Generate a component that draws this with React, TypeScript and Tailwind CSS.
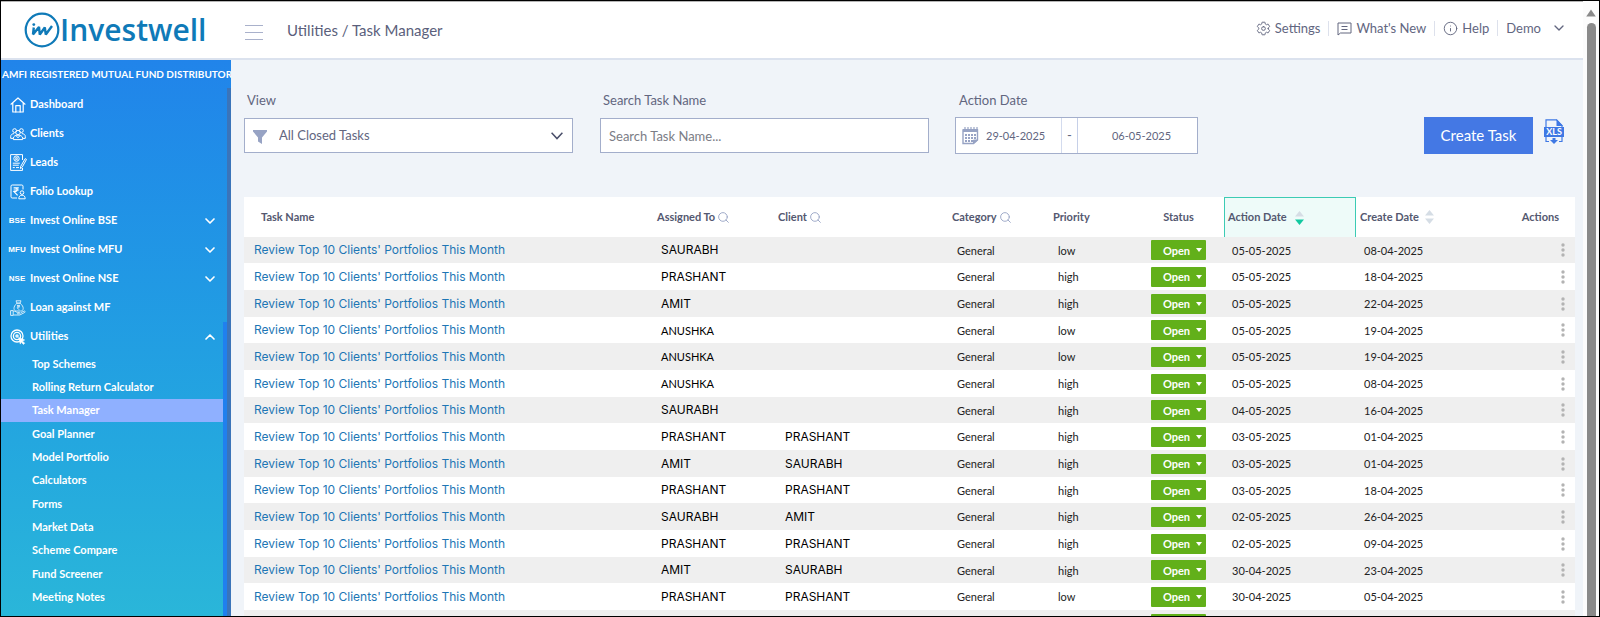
import React, { useState } from 'react';
import { Search, ChevronDown, ChevronUp, Info } from 'lucide-react';
import { IoSettingsOutline } from 'react-icons/io5';

interface Task {
  assignedTo: string;
  client?: string;
  priority: 'low' | 'high';
  actionDate: string;
  createDate: string;
}

const TASK_NAME = "Review Top 10 Clients' Portfolios This Month";

const tasks: Task[] = [
  { assignedTo: 'SAURABH', priority: 'low', actionDate: '05-05-2025', createDate: '08-04-2025' },
  { assignedTo: 'PRASHANT', priority: 'high', actionDate: '05-05-2025', createDate: '18-04-2025' },
  { assignedTo: 'AMIT', priority: 'high', actionDate: '05-05-2025', createDate: '22-04-2025' },
  { assignedTo: 'ANUSHKA', priority: 'low', actionDate: '05-05-2025', createDate: '19-04-2025' },
  { assignedTo: 'ANUSHKA', priority: 'low', actionDate: '05-05-2025', createDate: '19-04-2025' },
  { assignedTo: 'ANUSHKA', priority: 'high', actionDate: '05-05-2025', createDate: '08-04-2025' },
  { assignedTo: 'SAURABH', priority: 'high', actionDate: '04-05-2025', createDate: '16-04-2025' },
  { assignedTo: 'PRASHANT', client: 'PRASHANT', priority: 'high', actionDate: '03-05-2025', createDate: '01-04-2025' },
  { assignedTo: 'AMIT', client: 'SAURABH', priority: 'high', actionDate: '03-05-2025', createDate: '01-04-2025' },
  { assignedTo: 'PRASHANT', client: 'PRASHANT', priority: 'high', actionDate: '03-05-2025', createDate: '18-04-2025' },
  { assignedTo: 'SAURABH', client: 'AMIT', priority: 'high', actionDate: '02-05-2025', createDate: '26-04-2025' },
  { assignedTo: 'PRASHANT', client: 'PRASHANT', priority: 'high', actionDate: '02-05-2025', createDate: '09-04-2025' },
  { assignedTo: 'AMIT', client: 'SAURABH', priority: 'high', actionDate: '30-04-2025', createDate: '23-04-2025' },
  { assignedTo: 'PRASHANT', client: 'PRASHANT', priority: 'low', actionDate: '30-04-2025', createDate: '05-04-2025' },
  { assignedTo: 'AMIT', client: 'SAURABH', priority: 'low', actionDate: '30-04-2025', createDate: '05-04-2025' },
];

const HomeIcon = () => (
  <svg viewBox="0 0 16 16" className="w-4 h-4" fill="none" stroke="currentColor" strokeWidth="1.2" strokeLinejoin="round" strokeLinecap="round">
    <path d="M1 7.2 8 1l7 6.2M2.8 6v9h10.4V6" />
    <path d="M5.8 15V8.6h4.4V15" />
  </svg>
);

const ClientsIcon = () => (
  <svg viewBox="0 0 16 16" className="w-4 h-4" fill="none" stroke="currentColor" strokeWidth="1">
    <circle cx="4.6" cy="4.6" r="1.9" />
    <circle cx="11.4" cy="4.6" r="1.9" />
    <circle cx="8" cy="6.6" r="2.2" />
    <path d="M3.4 13.6v-1.4c0-2 2-3 4.6-3s4.6 1 4.6 3v1.4z" />
    <path d="M3.2 12.4H.7v-2c0-1.6 1.3-2.7 3.5-2.8M12.8 12.4h2.5v-2c0-1.6-1.3-2.7-3.5-2.8M6 9.6l2 2.2 2-2.2" />
  </svg>
);

const LeadsIcon = () => (
  <svg viewBox="0 0 17 17" className="w-[17px] h-[17px]" fill="none" stroke="currentColor" strokeWidth="1">
    <path d="M12.5 6V.6H.6v15.8h11.9V14" />
    <circle cx="6.5" cy="4.6" r="2.7" />
    <circle cx="6.5" cy="4.2" r=".9" />
    <path d="M5 6.4c.6-1 2.4-1 3 0M2.8 9.2h7M2.8 11.2h6M2.8 13.6h2M6 13.6h3" />
    <path d="m15.2 4.6 1.3.8-4.4 8-1.7 1.2.2-2z" />
  </svg>
);

const FolioIcon = () => (
  <svg viewBox="0 0 16 16" className="w-4 h-4" fill="none" stroke="currentColor" strokeWidth="1">
    <path d="M13 5.5V2.2C13 1.4 12.5 1 11.8 1H2.2C1.4 1 1 1.5 1 2.2v10.6c0 .8.5 1.2 1.2 1.2H7" />
    <path d="M3.6 3.8h5.2M3.6 6h5.2M4.6 3.8c3.6 0 3.4 3.8 0 3.8h-.6l3.6 3.8" strokeWidth="1.2" />
    <circle cx="12" cy="8.6" r="1.8" />
    <path d="M8.8 14.8c0-2.4 1.2-3.6 3.2-3.6s3.2 1.2 3.2 3.6z" />
  </svg>
);

const LoanIcon = () => (
  <svg viewBox="0 0 16 16" className="w-4 h-4 opacity-80" fill="none" stroke="currentColor" strokeWidth="1">
    <path d="M7 3.2 6 .8h5l-1 2.4zM7 3.2C4.8 5 4 6.8 4 8.4c0 1.8 1.2 2.6 2.5 2.6h4.2c1.4 0 2.5-.8 2.5-2.6 0-1.6-.9-3.4-3.2-5.2z" />
    <path d="M7 5.4h3M7 6.8h3M7.2 5.4c2.2 0 2 2.4 0 2.4l2 2" />
    <path d="M.6 10.6h2.6v4.8H.6zM3.2 11.2h1.6l2.8 1.4h2c.8 0 .8 1.2 0 1.2H7M3.2 15h6.6l5-2.6c.8-.6.2-1.6-.6-1.3l-3.4 1.5" />
  </svg>
);

const UtilitiesIcon = () => (
  <svg viewBox="0 0 16 16" className="w-4 h-4" fill="none" stroke="currentColor" strokeWidth="1.3">
    <circle cx="7" cy="7" r="6" />
    <circle cx="7" cy="7" r="3.6" />
    <circle cx="7" cy="7" r="1.1" />
    <path d="m8.6 8.6 6 2.4-2.2.9 2.3 2.3-1.2 1.2-2.3-2.3-.9 2z" fill="currentColor" strokeWidth=".6" />
  </svg>
);

const NoteIcon = () => (
  <svg viewBox="0 0 15 15" className="w-[15px] h-[15px]" fill="none" stroke="currentColor" strokeWidth="1">
    <path d="M1 14V2h13v10H3.5z" strokeLinejoin="round" />
    <path d="M4.5 5.5h6M4.5 8.5h6" />
  </svg>
);

const CodeIcon = ({ code }: { code: string }) => (
  <span className="font-['Liberation_Sans',sans-serif] text-[8px] mr-0.5">{code}</span>
);

const menu = [
  { label: 'Dashboard', icon: <HomeIcon /> },
  { label: 'Clients', icon: <ClientsIcon /> },
  { label: 'Leads', icon: <LeadsIcon /> },
  { label: 'Folio Lookup', icon: <FolioIcon /> },
  { label: 'Invest Online BSE', icon: <CodeIcon code="BSE" />, expandable: true },
  { label: 'Invest Online MFU', icon: <CodeIcon code="MFU" />, expandable: true },
  { label: 'Invest Online NSE', icon: <CodeIcon code="NSE" />, expandable: true },
  { label: 'Loan against MF', icon: <LoanIcon /> },
  { label: 'Utilities', icon: <UtilitiesIcon />, expandable: true, open: true },
];

const utilities = [
  'Top Schemes',
  'Rolling Return Calculator',
  'Task Manager',
  'Goal Planner',
  'Model Portfolio',
  'Calculators',
  'Forms',
  'Market Data',
  'Scheme Compare',
  'Fund Screener',
  'Meeting Notes',
];

function Logo() {
  return (
    <a href="#home" aria-label="Investwell" className="flex items-center text-[#0f7ab8]">
      <svg viewBox="0 0 36 36" className="w-9 h-9" fill="none" stroke="currentColor">
        <circle cx="18" cy="18" r="16.3" strokeWidth="2.2" />
        <circle cx="9.8" cy="12.6" r="1.4" fill="currentColor" stroke="none" />
        <path d="M9.8 15.5 9 22.5l6-7.500.8 7.500 5-7 1 7 6.200-8.500" strokeWidth="2.4" strokeLinejoin="bevel" />
      </svg>
      <span className="font-['Open_Sans',sans-serif] text-[30px] leading-9 font-semibold">Investwell</span>
    </a>
  );
}

function Header() {
  return (
    <header className="flex items-center h-[59px] shrink-0 bg-white border-t border-t-[#b5b5b5] border-b-2 border-b-[#dbe2ee]">
      <div className="w-[230px] pl-[23px] shrink-0">
        <Logo />
      </div>
      <button aria-label="Toggle menu" className="ml-3.5 w-[18px] flex flex-col gap-1.5 pt-1">
        <span className="h-px w-full bg-[#a9b1cb]" />
        <span className="h-px w-full bg-[#a9b1cb]" />
        <span className="h-px w-full bg-[#a9b1cb]" />
      </button>
      <h1 className="ml-6 text-[15px] text-[#5b5f7c]">Utilities / Task Manager</h1>
      <nav className="ml-auto mr-4 pb-1 flex items-center text-[13px] text-[#62667f]">
        <a href="#settings" className="flex items-center gap-1 pr-2 leading-[14px]">
          <IoSettingsOutline className="w-[15px] h-[15px]" />
          Settings
        </a>
        <a href="#whats-new" className="flex items-center gap-1 px-2 border-l border-[#dde1ec] leading-[14px]">
          <NoteIcon />
          What's New
        </a>
        <a href="#help" className="flex items-center gap-1 px-2 border-l border-[#dde1ec] leading-[14px]">
          <Info className="w-[15px] h-[15px]" strokeWidth={1.5} />
          Help
        </a>
        <button className="flex items-center gap-2.5 pl-2 border-l border-[#dde1ec] leading-[14px]">
          Demo
          <ChevronDown className="w-4 h-4" />
        </button>
      </nav>
    </header>
  );
}

function Sidebar() {
  return (
    <aside className="w-[230px] shrink-0 flex flex-col bg-linear-to-b from-[#2184ea] to-[#2ab6d9] text-white text-[11px] font-bold">
      <div className="h-7 shrink-0 pl-px leading-7 whitespace-nowrap text-[10px]">AMFI REGISTERED MUTUAL FUND DISTRIBUTOR</div>
      <div className="flex-1 min-h-0 flex">
        <nav className="flex-1 overflow-hidden pt-0.5">
          <ul>
            {menu.map((m) => (
              <li key={m.label} className={m.open ? 'border-r-4 border-[#2080ee]' : 'border-r-4 border-transparent'}>
                <button className="flex items-center w-full h-[29px] pl-1.5 pr-[5px] text-left">
                  <span className="w-[22px] flex items-center justify-center">{m.icon}</span>
                  <span className="flex-1 pl-px">{m.label}</span>
                  {m.expandable &&
                    (m.open ? <ChevronUp className="w-4 h-4" strokeWidth={2.5} /> : <ChevronDown className="w-4 h-4" strokeWidth={2.5} />)}
                </button>
              </li>
            ))}
          </ul>
          <ul className="pt-0.5 border-r-4 border-[#2080ee]">
            {utilities.map((u) => (
              <li key={u} className="nth-[3n]:pb-px">
                <a
                  href={`#${u}`}
                  className={`block h-[23px] leading-[22px] pl-[31px] ${u === 'Task Manager' ? 'bg-[#8fb0ff]' : ''}`}
                >
                  {u}
                </a>
              </li>
            ))}
            <li className="h-10" />
          </ul>
        </nav>
        <div className="w-1 bg-[#3b74b9]" />
      </div>
    </aside>
  );
}

function Filters() {
  const [view, setView] = useState('All Closed Tasks');
  const [search, setSearch] = useState('');
  const [from, setFrom] = useState('29-04-2025');
  const [to, setTo] = useState('06-05-2025');

  return (
    <div className="flex items-start text-[13px] text-[#62667f]">
      <div className="w-[329px] mr-[27px]">
        <label htmlFor="view" className="block pl-[3px] h-[27px] leading-[18px]">View</label>
        <div className="relative">
          <select
            id="view"
            value={view}
            onChange={(e) => setView(e.target.value)}
            className="appearance-none w-full h-[35px] pl-[34px] bg-white border border-[#a3aecb] outline-none"
          >
            <option>All Closed Tasks</option>
            <option>All Open Tasks</option>
          </select>
          <svg viewBox="0 0 14 14" className="absolute left-[9px] top-3 w-3.5 h-3.5 pointer-events-none" fill="#97a3c4">
            <path d="M0 0h14v1.500L9 7.500V14l-4-2.500v-4L0 1.500z" />
          </svg>
          <svg viewBox="0 0 12 8" className="absolute right-2.5 top-3.5 w-3 h-2 pointer-events-none" fill="none" stroke="#4a4f6a" strokeWidth="1.5">
            <path d="m.6.8 5.4 5.8L11.400.8" />
          </svg>
        </div>
      </div>
      <div className="w-[329px] mr-[26px]">
        <label htmlFor="search" className="block pl-[3px] h-[27px] leading-[18px]">Search Task Name</label>
        <input
          id="search"
          value={search}
          onChange={(e) => setSearch(e.target.value)}
          placeholder="Search Task Name..."
          className="w-full h-[35px] px-2 bg-white border border-[#a3aecb] outline-none placeholder:text-[#7b7d86]"
        />
      </div>
      <div className="w-[243px]">
        <label htmlFor="from" className="block pl-1 h-[26px] leading-[18px]">Action Date</label>
        <div className="flex items-center h-[37px] bg-white border border-[#a3aecb]">
          <svg viewBox="0 0 17 18" className="ml-1.5 w-[17px] h-[18px]" fill="none" stroke="#97a3c4">
            <path d="M1 3v13.5h10.5l4-3.500V3z" strokeWidth="1.4" />
            <path d="M1 3.5h15" strokeWidth="3" />
            <path d="M3 0v3M6 0v3M9 0v3M12 0v3M15 0v3" strokeWidth="1.2" />
            <path d="M3 8h11M3 11h11M3 14h8" strokeWidth="2" strokeDasharray="2 1" />
            <path d="m11.5 16.5 4-3.500h-4z" fill="#97a3c4" />
          </svg>
          <input
            id="from"
            value={from}
            onChange={(e) => setFrom(e.target.value)}
            className="w-[83px] h-full pl-[7px] text-[11px] border-r border-[#d3dbee] outline-none"
          />
          <span className="w-4 h-full flex items-center justify-center border-r border-[#c6d0e8]">-</span>
          <input
            id="to"
            aria-label="Action date to"
            value={to}
            onChange={(e) => setTo(e.target.value)}
            className="flex-1 min-w-0 h-full pl-2 text-center text-[11px] outline-none"
          />
        </div>
      </div>
      <button className="ml-auto mt-[26px] w-[109px] h-[37px] bg-[#4478e4] text-white text-[15px]">Create Task</button>
      <button aria-label="Export to XLS" className="ml-[11px] mr-[11px] mt-7">
        <svg viewBox="0 0 20 25" className="w-5 h-[25px]" fill="none" stroke="#3f78e4" strokeWidth="1.2">
          <path d="M2 8V.8h10.500L18 6.500V8M2 17.500v5h3M18 17.500v5h-3" />
          <path d="M12.5 0 19 7h-6.500z" fill="#3f78e4" stroke="none" />
          <path d="M0 8h20v10H0z" fill="#3f78e4" stroke="none" />
          <path d="M8.5 19h3v2h2.500L10 25l-4-4h2.500z" fill="#3f78e4" stroke="none" />
          <text x="10" y="16" textAnchor="middle" fontSize="9" fontWeight="700" fill="#fff" stroke="none">XLS</text>
        </svg>
      </button>
    </div>
  );
}

const SortArrows = ({ active }: { active?: boolean }) => (
  <svg viewBox="0 0 9 14" className="w-[9px] h-3.5">
    <path d="M4.5 0 9 5.500H0z" fill="#d5dde5" />
    <path d="M4.5 14 9 8.500H0z" fill={active ? '#12c9a0' : '#d5dde5'} />
  </svg>
);

const SearchMark = () => <Search className="w-[13px] h-[13px] text-[#9ba6c6]" strokeWidth={1.75} />;

function TaskTable() {
  return (
    <table className="w-full mt-[43px] table-fixed border-collapse bg-white text-left text-[11px]">
      <colgroup>
        <col />
        <col className="w-[122px]" />
        <col className="w-[173px]" />
        <col className="w-[101px]" />
        <col className="w-[87px]" />
        <col className="w-[91px]" />
        <col className="w-[132px]" />
        <col className="w-[134px]" />
        <col className="w-[85px]" />
      </colgroup>
      <thead>
        <tr className="h-10 text-[#545870]">
          <th className="pl-[17px]">Task Name</th>
          <th className="pl-[7px]">
            <span className="flex items-center gap-0.5">Assigned To <SearchMark /></span>
          </th>
          <th className="pl-1.5">
            <span className="flex items-center gap-0.5">Client <SearchMark /></span>
          </th>
          <th className="pl-[7px]">
            <span className="flex items-center gap-0.5">Category <SearchMark /></span>
          </th>
          <th className="pl-[7px]">Priority</th>
          <th className="text-center">Status</th>
          <th className="p-0 h-10">
            <button className="flex items-center gap-2 w-full h-10 pl-[3px] bg-[#eefbf9] border border-b-0 border-[#3ccbb4]">
              Action Date <SortArrows active />
            </button>
          </th>
          <th className="pl-1">
            <button className="flex items-center gap-1.5">
              Create Date <SortArrows />
            </button>
          </th>
          <th className="pr-4 text-right">Actions</th>
        </tr>
      </thead>
      <tbody className="text-[#222] leading-none">
        {tasks.map((t, i) => (
          <tr key={i} className="h-[27px] nth-[3n+1]:h-[26px] odd:bg-[#efefef]">
            <td className="pl-2.5 font-['Inter',sans-serif] text-[12px] leading-none text-[#1d76b5]">
              <a href={`#task-${i}`}>{TASK_NAME}</a>
            </td>
            <td
              className={`pl-[11px] text-black ${t.assignedTo === 'ANUSHKA' ? '' : "font-['Inter',sans-serif] text-[12px] leading-none"}`}
            >
              {t.assignedTo}
            </td>
            <td className="pl-[13px] font-['Inter',sans-serif] text-[12px] leading-none text-black">{t.client}</td>
            <td className="pl-3">General</td>
            <td className="pl-3">{t.priority}</td>
            <td>
              <button
                aria-haspopup="menu"
                className="mx-auto flex items-center justify-end gap-1.5 w-[55px] h-5 pr-1 rounded-[1px] bg-[#62b01a] text-white font-bold"
              >
                Open
                <svg viewBox="0 0 6 4" className="w-1.5 h-1" fill="currentColor">
                  <path d="M0 0h6L3 4z" />
                </svg>
              </button>
            </td>
            <td className="pl-2">{t.actionDate}</td>
            <td className="pl-2">{t.createDate}</td>
            <td className="pr-2.5">
              <button aria-label="Row actions" className="ml-auto block">
                <svg viewBox="0 0 4 14" className="w-1 h-3.5" fill="#b3b3b3">
                  <circle cx="2" cy="2" r="1.7" />
                  <circle cx="2" cy="7" r="1.7" />
                  <circle cx="2" cy="12" r="1.7" />
                </svg>
              </button>
            </td>
          </tr>
        ))}
      </tbody>
    </table>
  );
}

export default function App() {
  return (
    <div className="h-screen flex bg-white border border-black overflow-hidden font-['Lato',sans-serif]">
      <div className="flex-1 min-w-0 flex flex-col">
        <Header />
        <div className="flex-1 min-h-0 flex">
          <Sidebar />
          <main className="flex-1 min-w-0 overflow-hidden bg-[#f0f4f9] pt-[31px] pl-[13px] pr-2">
            <Filters />
            <TaskTable />
          </main>
        </div>
      </div>
      {/* Page scrollbar */}
      <div className="w-4 shrink-0 flex flex-col items-center bg-[#fcfcfc]">
        <svg viewBox="0 0 10 8" className="mt-2 mb-1.5 w-2.5 h-2" fill="#8a8a8a">
          <path d="M5 .5 9.8 7.500H.2z" />
        </svg>
        <div className="w-[9px] flex-1 rounded-t-full bg-[#8a8a8a]" />
      </div>
    </div>
  );
}
